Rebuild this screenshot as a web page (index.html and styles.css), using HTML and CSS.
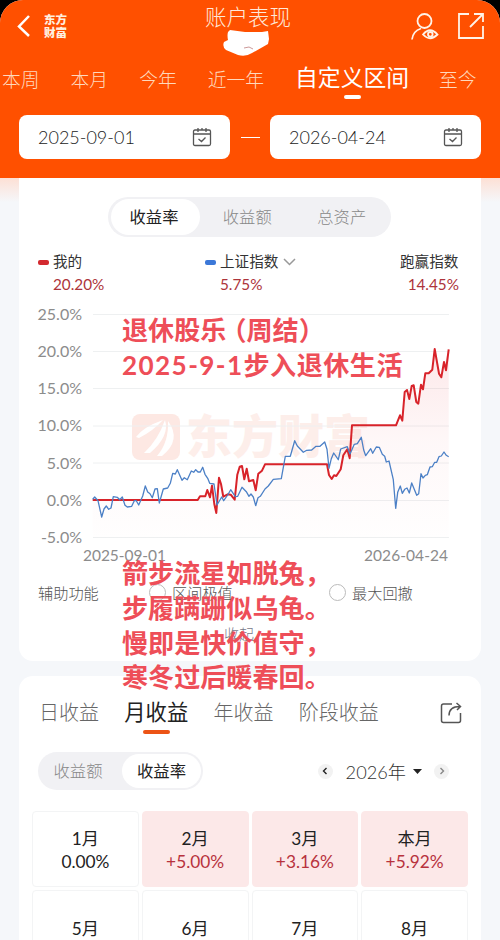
FILE: index.html
```html
<!DOCTYPE html>
<html lang="zh-CN">
<head>
<meta charset="UTF-8">
<title>账户表现</title>
<link rel="stylesheet" href="styles.css">
</head>

<body>
<div id="wrapper">
	<div id="header">
		<div class="topbar">
			<svg class="icon-back" width="14" height="24" viewBox="0 0 14 24"><path d="M12 2 2 12.500 12 22"/></svg>
			<div class="logo">东方<br>财富</div>
			<div class="title">
				<h1>账户表现</h1>
				<svg width="48" height="29" viewBox="0 0 48 29"><path class="scribble" d="M8 1 23 3 40 3 46 2 47 10 46 15 39 19 30 24Q24 28 16 26L4 21Q0 18 2 13L6 11Q5 6 6 3Z"/><path class="scratch" d="M22 19 27 18 31 20"/></svg>
			</div>
			<svg class="icon-user" width="30" height="30" viewBox="0 0 30 30"><circle cx="14.500" cy="9" r="7"/><path d="M2 27.500Q3 19 11 16.500"/><path d="M13 22.500Q20 14 27.500 22.500Q20 30 13 22.500Z"/><circle cx="20.300" cy="22.300" r="2.300"/></svg>
			<svg class="icon-open" width="28" height="28" viewBox="0 0 28 28"><path d="M12 2H2V26H26V14M13 15 25.500 2.500M17 2H26V10"/></svg>
		</div>
		<div class="ranges">
			<span>本周</span>
			<span>本月</span>
			<span>今年</span>
			<span>近一年</span>
			<span class="active">自定义区间</span>
			<span>至今</span>
		</div>
		<div class="dates">
			<div class="date">2025-09-01
				<svg width="20" height="20" viewBox="0 0 20 20"><path d="M3 3H17Q18.500 3 18.500 4.500V17Q18.500 18.500 17 18.500H3Q1.500 18.500 1.500 17V4.500Q1.500 3 3 3ZM1.500 7H18.500M6 1V5M10 1V3M14 1V5M6.500 12 9.500 14.500 13.500 10.500"/></svg>
			</div>
			<i></i>
			<div class="date">2026-04-24
				<svg width="20" height="20" viewBox="0 0 20 20"><path d="M3 3H17Q18.500 3 18.500 4.500V17Q18.500 18.500 17 18.500H3Q1.500 18.500 1.500 17V4.500Q1.500 3 3 3ZM1.500 7H18.500M6 1V5M10 1V3M14 1V5M6.500 12 9.500 14.500 13.500 10.500"/></svg>
			</div>
		</div>
	</div><!-- end of header -->

	<div id="content">
		<div class="card card-chart">
			<div class="switch switch-main">
				<span class="active">收益率</span>
				<span>收益额</span>
				<span>总资产</span>
			</div>

			<div class="legend">
				<div class="mine">
					<h2><b class="dot red"></b>我的</h2>
					<p>20.20%</p>
				</div>
				<div class="index">
					<h2><b class="dot blue"></b>上证指数<svg width="13" height="8" viewBox="0 0 13 8"><path d="M1 1 6.500 6.500 12 1"/></svg></h2>
					<p>5.75%</p>
				</div>
				<div class="beat">
					<h2>跑赢指数</h2>
					<p>14.45%</p>
				</div>
			</div>

			<!-- chart units are page pixels -->
			<svg class="chart" width="462" height="268" viewBox="19 300 462 268">
				<defs>
					<linearGradient id="area" x1="0" y1="0" x2="0" y2="1">
						<stop offset="0" stop-color="#e8303a" stop-opacity=".11"/>
						<stop offset=".5" stop-color="#e8303a" stop-opacity=".035"/>
						<stop offset="1" stop-color="#e8303a" stop-opacity=".005"/>
					</linearGradient>
				</defs>
				<g class="watermark">
					<rect x="132" y="414" width="48" height="46" rx="8"/>
					<path class="leaf" d="M136 437Q143 427 163 420Q153 431 139 438ZM144 453Q158 440 165 420Q170 436 150 453ZM157 456Q169 442 168 421Q182 440 162 456Z"/>
					<text x="186" y="453">东方财富</text>
				</g>
				<path class="grid" d="M93 314.500H449M93 351.500H449M93 388.500H449M93 426H449M93 463H449M93 500.500H449M93 537.500H449"/>
				<g class="axis-y">
					<text x="82" y="320">25.0%</text>
					<text x="82" y="357">20.0%</text>
					<text x="82" y="394">15.0%</text>
					<text x="82" y="431">10.0%</text>
					<text x="82" y="469">5.0%</text>
					<text x="82" y="506">0.0%</text>
					<text x="82" y="543">-5.0%</text>
				</g>
				<path fill="url(#area)" d="M92.700 537.500V500H197.700L200 496.300 205.300 496.300 212 485.700 216.300 513 219 477.700 223.300 496.700 234.700 499.700 239.700 466.700 249 481.300 255.700 490.300 258.300 473.700 265 464.300 327 464.300 331.700 479 340.700 469.300 347.300 449.300 352 425.300 396 425.300 402.300 420.700 404.700 392 409.300 399 413.700 385.300 418.300 403.700 425.300 373.300 432.300 369.700 434.700 349 441.300 377.300 448.700 349.300V537.500Z"/>
				<polyline class="line-red" points="92.7,500 197.7,500 200,496.3 205.3,496.3 207.3,490 210,497.3 212,485.7 214.3,504 216.3,513 219,477.7 221,484 223.3,496.7 227.7,494.3 230.7,494.7 234.7,499.7 237.3,474.7 239.7,466.7 242,466 244.3,479.3 246.7,468.7 249,481.3 253.3,480 255.7,490.3 258.3,473.7 262,470.7 265,464.3 327,464.3 329,475 331.7,479 334,475.3 336.3,476 340.7,469.3 343.3,455.3 347.3,449.3 349.7,458.3 352,425.3 396,425.3 400,415.3 402.3,420.7 404.7,392 407,390 409.3,399 411.7,386 413.7,385.3 416.3,402 418.3,403.7 421,384.7 423,389.3 425.3,373.3 428.7,373.3 432.3,369.7 434.7,349 439,373.7 441.3,377.3 444,362 446,370.3 448.7,349.3"/>
				<polyline class="line-blue" points="92.7,499.3 94.7,497 98,500.7 101.7,517 104,509 106.3,506 108.7,509.3 111,508 113.3,496.7 117.3,497.3 119.7,499.7 122.3,497 125,505.3 127.3,507 131.7,506.3 134.3,500.7 136.3,500.7 138.7,505 142.7,496 145.3,486 147.7,492 150,493.7 152.3,497.7 155,489 157.3,488.7 159.3,503 163.3,489 167.7,488 170.3,483.3 172.7,473.3 175.3,474 177.3,469.7 182,480.3 184.3,477.7 187.3,479.7 191.3,471 193.7,472.3 195.7,469.7 198,472 200.3,472 202.7,467.3 205,474.3 207.7,478.3 209.7,483.3 214,484 217,505 221.7,497 223.7,500.7 227.7,495 230.7,489.7 235.3,496.7 237.7,496.3 242,487.3 246.3,491.7 249,496.3 251,494 253.3,497 255.7,505.7 258,497.7 260.3,496.3 265,489 268.3,486 273.3,479.3 281.3,478.7 285.3,456.3 290.3,456.3 294.7,440.7 297.3,446 303.3,452.3 306.7,450.3 311.7,450 316,446.3 320,446.3 324.7,442 327,449.3 329,468.3 331.3,458.7 333.7,453 338.3,459.7 340.7,449 347.3,446.7 350,454 354.3,444.3 357.3,443.7 361.3,437.3 363.7,450 365.7,455.7 370.7,448.7 372.7,453.3 376.3,447 379.3,447.3 382.3,454.3 384.7,456.3 386.3,462 389,461 393.3,479.7 395.7,508.3 397.7,492.3 400.3,486 402.3,493.3 404.7,489.3 407,488 409.3,493 411.7,483 416.7,495.3 418.7,493.7 421,473.7 423,478 425.3,475.3 427.3,474.7 430,467 432.3,466.7 434.7,462.3 436.7,462.3 439,456.7 441.3,456 444,452 446.3,455.3 448.7,456.7"/>
				<g class="axis-x">
					<text x="83" y="561" textLength="83">2025-09-01</text>
					<text x="364" y="561" textLength="84">2026-04-24</text>
				</g>
			</svg>

			<div class="tools">
				<span class="label">辅助功能</span>
				<span class="radio extreme">区间极值</span>
				<span class="radio">最大回撤</span>
			</div>
			<div class="fold">收起</div>

			<div class="note note-top">退休股乐<span class="paren">（</span>周结）<br><em>2025-9-1</em><span class="wide">步入退休生活</span></div>
			<div class="note note-bottom">箭步流星如脱兔，<br>步履蹒跚似乌龟。<br>慢即是快价值守，<br>寒冬过后暖春回。</div>
		</div><!-- end of card-chart -->

		<div class="card card-months">
			<div class="periods">
				<span>日收益</span>
				<span class="active">月收益</span>
				<span>年收益</span>
				<span>阶段收益</span>
				<svg width="22" height="22" viewBox="0 0 22 22"><path d="M12 2H3.500Q1.500 2 1.500 4V18.500Q1.500 20.500 3.500 20.500H18.500Q20.500 20.500 20.500 18.500V11M9 13.500Q9 4.500 20 4.500M16.500 1 20.500 4.500 17 8"/></svg>
			</div>
			<div class="filter">
				<div class="switch switch-small">
					<span>收益额</span>
					<span class="active">收益率</span>
				</div>
				<div class="year">
					<b class="arrow"><svg width="6" height="8" viewBox="0 0 6 8"><path d="M4.500 1 1.500 4 4.500 7"/></svg></b>
					<span>2026年</span>
					<svg class="caret" width="9" height="5" viewBox="0 0 9 5"><path d="M0 0H9L4.500 5Z"/></svg>
					<b class="arrow next"><svg width="6" height="8" viewBox="0 0 6 8"><path d="M1.500 1 4.500 4 1.500 7"/></svg></b>
				</div>
			</div>
			<div class="months">
				<div class="month"><h3>1月</h3><p>0.00%</p></div>
				<div class="month up"><h3>2月</h3><p>+5.00%</p></div>
				<div class="month up"><h3>3月</h3><p>+3.16%</p></div>
				<div class="month up"><h3>本月</h3><p>+5.92%</p></div>
				<div class="month empty"><h3>5月</h3></div>
				<div class="month empty"><h3>6月</h3></div>
				<div class="month empty"><h3>7月</h3></div>
				<div class="month empty"><h3>8月</h3></div>
			</div>
		</div><!-- end of card-months -->
	</div><!-- end of content -->
</div><!-- end of wrapper -->
</body>
</html>
```
FILE: styles.css
```css
*{
	box-sizing:border-box;
}
body{
	font-family:Lato, "Noto Sans CJK SC", sans-serif;
	margin:0;
	background:#000;
	color:#333;
}
h1, h2, h3, p{
	margin:0;
	font-weight:normal;
}
svg{
	display:block;
	fill:none;
	flex:none;
}
#wrapper{
	width:500px;
	height:940px;
	overflow:hidden;
	background:#f5f7fa;
	border-radius:23px 23px 0 0;
}

/* header */
#header{
	height:178px;
	background:#ff5000;
	color:#fff;
}
.topbar{
	display:flex;
	height:60px;
	padding-left:17px;
}
.topbar svg{
	stroke:#fff3e8;
	stroke-width:1.8;
}
.topbar .icon-back{
	margin-top:14px;
	stroke:#fff;
	stroke-width:2.5;
}
.logo{
	width:24px;
	margin:14px 0 0 13px;
	font-size:11.5px;
	font-weight:900;
	line-height:12.5px;
	color:#fff0e0;
	white-space:nowrap;
}
.title{
	width:90px;
	margin:5px 0 0 137px;
}
.title h1{
	font-size:21.5px;
	font-weight:300;
	line-height:24px;
	white-space:nowrap;
	color:#ffe9da;
}
.topbar .title svg{
	margin-left:17px;
	stroke:none;
}
.title .scribble{
	fill:#fff;
}
.title .scratch{
	stroke:#c99;
	stroke-width:1;
}
.icon-user{
	margin:12px 0 0 115px;
}
.icon-open{
	margin:12px 0 0 17px;
}
.ranges{
	display:flex;
	gap:31px;
	height:55px;
	padding:5px 0 0 2px;
	font-size:18.8px;
	font-weight:300;
	line-height:30px;
	white-space:nowrap;
	color:#ffd9bd;
}
.ranges .active{
	font-size:22.8px;
	font-weight:400;
	line-height:24px;
	color:#fff;
	margin-right:-1px;
}
.ranges .active:after{
	content:"";
	display:block;
	width:17px;
	height:4px;
	margin:6px auto 0;
	border-radius:2px;
	background:#fff;
}
.dates{
	display:flex;
	align-items:center;
	justify-content:space-between;
	padding:0 19px;
}
.dates i{
	width:19px;
	height:1px;
	background:#fff;
}
.date{
	display:flex;
	align-items:center;
	justify-content:space-between;
	width:211px;
	height:44px;
	padding:0 18px 0 19px;
	border-radius:8px;
	background:#fff;
	color:#222;
	font-size:18px;
	font-weight:300;
}
.date svg{
	stroke:#555;
	stroke-width:1.3;
}

/* cards */
#content{
	height:762px;
	padding:0 19px;
	background:linear-gradient(#fde0d5, #f5f7fa 24px);
}
.card{
	position:relative;
	background:#fff;
}
.card-chart{
	z-index:1;
	height:483px;
	padding-top:19px;
	border-radius:0 0 14px 14px;
}
.switch{
	display:flex;
	border-radius:20px;
	background:#f1f1f4;
	color:#888;
	font-weight:300;
	text-align:center;
}
.switch span{
	flex:1;
}
.switch .active{
	border-radius:20px;
	background:#fff;
	color:#222;
	font-weight:400;
}
.switch-main{
	width:283px;
	height:40px;
	margin-left:89px;
	padding:2px 2px 2px 3px;
	font-size:16.3px;
	line-height:35px;
}
.switch-main .active{
	flex:none;
	width:89px;
	padding-right:3px;
}
.legend{
	display:flex;
	height:65px;
	padding:13px 0 0 19px;
}
.legend h2{
	display:flex;
	align-items:center;
	font-size:14.6px;
	line-height:24px;
	white-space:nowrap;
}
.legend p{
	font-size:15.3px;
	line-height:21px;
	color:#ad343b;
}
.legend .mine{
	width:167px;
}
.legend .index{
	width:195px;
}
.legend .mine p, .legend .index p{
	margin-left:15px;
}
.legend .beat{
	width:59px;
}
.legend .beat p{
	text-align:right;
}
.legend svg{
	margin-left:5px;
	stroke:#999;
	stroke-width:1.5;
}
.dot{
	width:11px;
	height:5px;
	margin-right:4px;
	border-radius:2px;
}
.red{
	background:#d3292f;
}
.blue{
	background:#3b78d8;
}

/* chart */
.chart{
	margin-top:-2px;
}
.grid{
	stroke:#eef0f1;
}
.chart text{
	font-size:15.5px;
	fill:#8c8c8c;
}
.chart .axis-y text{
	text-anchor:end;
	font-size:16px;
}
.watermark rect{
	fill:#fde8e3;
}
.watermark .leaf{
	fill:#fff;
}
.chart .watermark text{
	font-size:46px;
	font-weight:900;
	fill:#fdeeea;
}
.line-red{
	stroke:#d8232a;
	stroke-width:2;
	stroke-linejoin:round;
}
.line-blue{
	stroke:#4c80c6;
	stroke-width:1.3;
	stroke-linejoin:round;
}
.tools{
	display:flex;
	align-items:center;
	height:30px;
	margin-top:9px;
	padding-left:19px;
	font-size:15.2px;
	font-weight:300;
	color:#555;
}
.tools .label{
	width:112px;
}
.radio{
	display:flex;
	align-items:center;
}
.radio:before{
	content:"";
	width:15px;
	height:15px;
	margin-right:6px;
	border:1px solid #bbb;
	border-radius:50%;
}
.tools .radio{
	margin-left:-1px;
}
.extreme{
	width:181px;
}
.fold{
	margin:16px 0 0 205px;
	font-size:15px;
	font-weight:300;
	line-height:22px;
	color:#778;
}

/* notes lying over the chart */
.note{
	position:absolute;
	left:103px;
	font-size:26.1px;
	font-weight:700;
	line-height:34.8px;
	white-space:nowrap;
	color:#ee4e58;
}
.note-top{
	top:135px;
}
.note-bottom{
	top:378px;
}
.note em{
	font-style:normal;
	letter-spacing:1.4px;
}
.note .wide{
	letter-spacing:.5px;
}
.paren{
	margin-left:-6px;
}

/* months */
.card-months{
	height:280px;
	margin-top:15px;
	padding:20px 13px 0 13px;
	border-radius:14px 14px 0 0;
}
.periods{
	display:flex;
	height:55px;
	padding-left:7px;
	font-size:20px;
	font-weight:300;
	line-height:33px;
	white-space:nowrap;
	color:#666;
}
.periods span{
	margin-right:25.3px;
}
.periods .active{
	font-size:21.3px;
	font-weight:400;
	color:#222;
}
.periods .active:after{
	content:"";
	display:block;
	width:27px;
	height:4px;
	margin:1px auto 0;
	border-radius:2px;
	background:#ec5416;
}
.periods svg{
	margin:6px 0 0 36px;
	stroke:#555;
	stroke-width:1.5;
}
.filter{
	display:flex;
	align-items:center;
	justify-content:space-between;
	height:60px;
	padding:0 19px 20px 6px;
}
.switch-small{
	width:165px;
	height:38px;
	padding:2px 2px 2px 0;
	font-size:16.4px;
	line-height:33px;
}
.switch-small .active{
	flex:none;
	width:79px;
}
.switch-small span:first-child{
	padding-right:4px;
}
.year{
	display:flex;
	align-items:center;
	font-size:18.2px;
	color:#333;
}
.year span{
	margin:0 7px 0 13px;
	font-weight:300;
}
.caret{
	fill:#222;
}
.arrow{
	display:flex;
	align-items:center;
	justify-content:center;
	width:15px;
	height:15px;
	border-radius:50%;
	background:#f2f2f2;
}
.arrow svg{
	stroke:#222;
	stroke-width:1.4;
}
.next{
	margin-left:12px;
}
.next svg{
	stroke:#888;
}
.months{
	display:grid;
	grid-template-columns:repeat(4, 1fr);
	grid-auto-rows:76px;
	gap:3px;
}
.month{
	padding-top:15px;
	border:1px solid #f3f4f5;
	border-radius:4px;
	text-align:center;
	color:#222;
}
.month h3{
	font-size:17.2px;
	line-height:24px;
}
.month p{
	font-size:17.3px;
	line-height:22px;
}
.up{
	border-color:#fce8e8;
	background:#fce8e8;
}
.up p{
	color:#b8323d;
}
.empty{
	padding-top:26px;
}
```
